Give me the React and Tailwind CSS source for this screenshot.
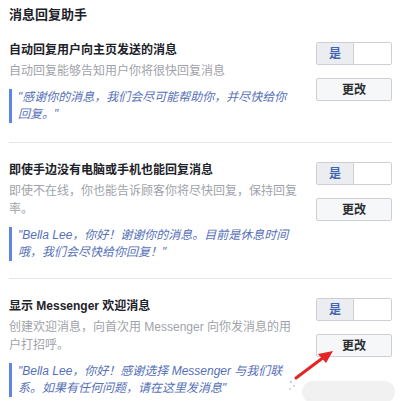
const font = { fontFamily: '"Liberation Sans", "Noto Sans CJK SC", sans-serif' };

const sections = [
  {
    title: '自动回复用户向主页发送的消息',
    desc: ['自动回复能够告知用户你将很快回复消息'],
    quote: ['"感谢你的消息，我们会尽可能帮助你，并尽快给你', '回复。"'],
    pb: 'pb-[19px]',
  },
  {
    title: '即使手边没有电脑或手机也能回复消息',
    desc: ['即使不在线，你也能告诉顾客你将尽快回复，保持回复', '率。'],
    quote: ['"Bella Lee，你好！谢谢你的消息。目前是休息时间', '哦，我们会尽快给你回复！"'],
    pb: 'pb-[17px]',
  },
  {
    title: '显示 Messenger 欢迎消息',
    desc: ['创建欢迎消息，向首次用 Messenger 向你发消息的用', '户打招呼。'],
    quote: ['"Bella Lee，你好！感谢选择 Messenger 与我们联', '系。如果有任何问题，请在这里发消息"'],
    pb: 'pb-[17px]',
  },
];

function Section({ s, last }) {
  return (
    <div className={`flex pt-[18px] ${s.pb} ${last ? '' : 'border-b border-[#e6e7ea]'}`}>
      <div className="w-[291px] shrink-0">
        <div className="text-[12px] leading-[18px] font-bold text-[#1d2129] whitespace-nowrap">{s.title}</div>
        <div className="mt-[3px] text-[12px] leading-[18px] text-[#a0a3aa] whitespace-nowrap">
          {s.desc.map((l, i) => (
            <div key={i}>{l}</div>
          ))}
        </div>
        <div className="mt-[9px] border-l-[3px] border-[#5b86e5] pl-[6px] text-[12px] leading-[17px] italic text-[#5570b8] whitespace-nowrap">
          {s.quote.map((l, i) => (
            <div key={i}>{l}</div>
          ))}
        </div>
      </div>
      <div className="ml-auto flex flex-col gap-[13px] pt-[1px]">
        <div className="flex h-[23px] w-[76px] rounded-[2px] border border-[#ccd0d5] overflow-hidden">
          <div className="flex w-[37px] items-center justify-center bg-[#ebedf0] border-r border-[#ccd0d5] text-[12px] font-bold text-[#4267b2]">
            是
          </div>
          <div className="flex-1 bg-white" />
        </div>
        <div className="flex h-[23px] w-[76px] items-center justify-center rounded-[2px] border border-[#ccd0d5] bg-[#f6f7f9] text-[12px] font-semibold text-[#2b2e33]">
          更改
        </div>
      </div>
    </div>
  );
}

export default function App() {
  return (
    <div className="relative w-[410px] h-[401px] overflow-hidden bg-white" style={font}>
      <div className="pl-[9px] pr-[18px] pt-[7px]">
        <div className="text-[13px] leading-[16px] font-bold text-[#1d2129]">消息回复助手</div>
        {sections.map((s, i) => (
          <Section key={i} s={s} last={i === sections.length - 1} />
        ))}
      </div>
      <div className="absolute left-[302px] top-[381px] h-[22px] w-[93px] rounded-full bg-[#f1f1f1]" />
      <svg className="absolute left-0 top-0" width="410" height="401" viewBox="0 0 410 401">
        <line x1="296" y1="378" x2="324" y2="357" stroke="#e42525" strokeWidth="3" strokeLinecap="round" />
        <polygon points="333,351 318,354 326,363" fill="#e42525" />
        <circle cx="291" cy="382" r="1" fill="#bbb" />
        <circle cx="294" cy="386" r="1" fill="#ccc" />
        <circle cx="290" cy="389" r="1" fill="#ccc" />
      </svg>
    </div>
  );
}
